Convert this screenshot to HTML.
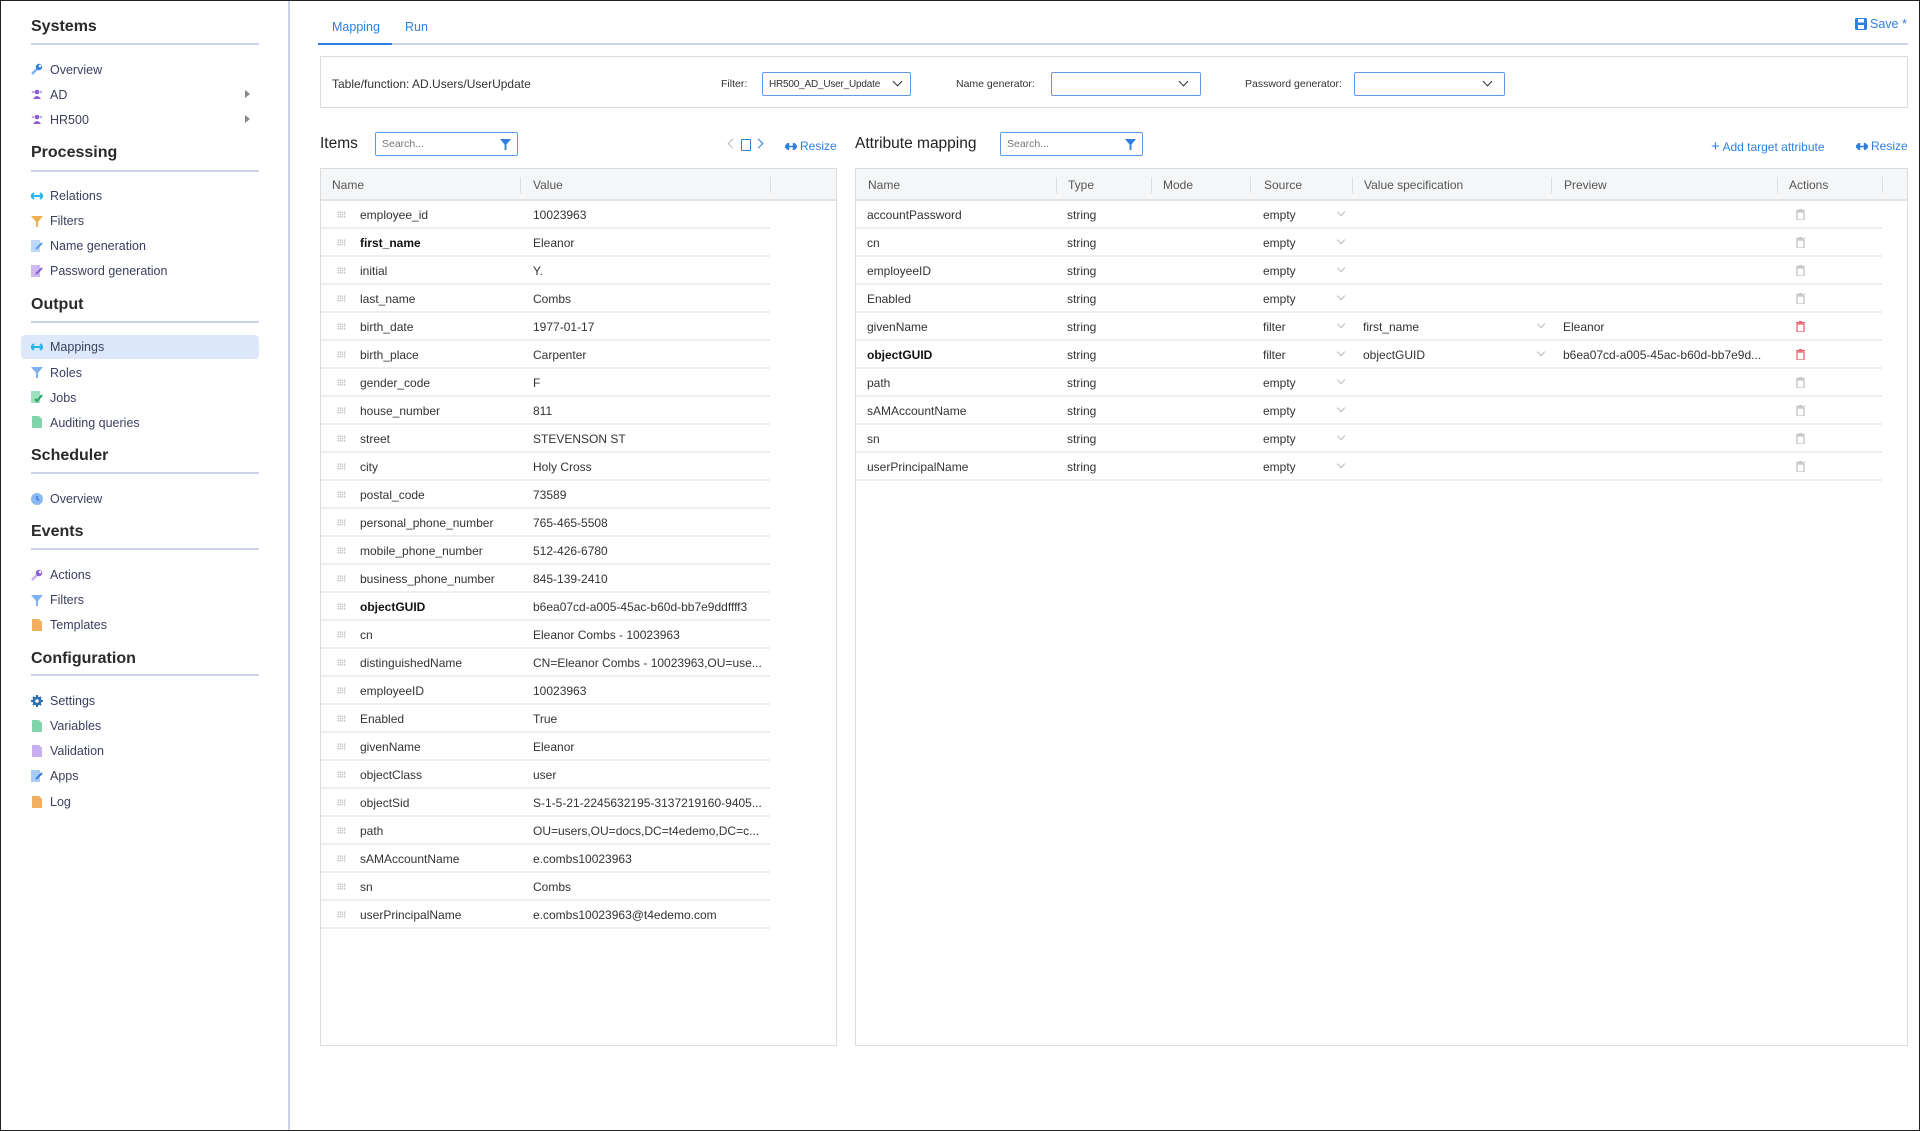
<!DOCTYPE html>
<html><head><meta charset="utf-8"><style>
*{box-sizing:border-box;margin:0;padding:0}
body{width:1920px;height:1131px;position:relative;overflow:hidden;background:#fff;font-family:"Liberation Sans",sans-serif;color:#333;font-size:12px}
.a{position:absolute;white-space:nowrap}
.frame{position:absolute;left:0;top:0;width:1920px;height:1131px;border:1.5px solid #222;pointer-events:none}
.side{position:absolute;left:0;top:0;width:290px;height:1131px;border-right:2px solid #cdd3e6}
.h{font-size:16px;font-weight:bold;color:#2a2a2a;left:31px}
.ln{position:absolute;left:31px;width:228px;height:2px;background:#cdd3e6}
.it{left:50px;font-size:12.5px;color:#3c4060}
.ic{position:absolute;left:31px;width:12px;height:12px}
.blue{color:#2f7fe0}
.tbl{position:absolute;border:1px solid #dcdcdc;background:#fff}
.th{position:absolute;left:0;top:0;right:0;height:32px;background:#f5f6f7;border-bottom:2px solid #e3e3e3}
.row{position:absolute;left:0;height:28px;border-bottom:2px solid #eeeef0}
.row span{position:absolute;top:7px;white-space:nowrap}
.dh{position:absolute;left:16px;top:10px;width:9px;height:7px;background-image:radial-gradient(#bbb 0.7px,transparent 0.8px);background-size:2.2px 2.3px}
.sel{position:absolute;height:24px;border:1px solid #5b9be8;border-radius:2px;background:#fff}
.chev{position:absolute;width:7px;height:7px;border-right:1.5px solid #333;border-bottom:1.5px solid #333;transform:rotate(45deg)}
.cv{position:absolute;width:6px;height:6px;border-right:1px solid #bbb;border-bottom:1px solid #bbb;transform:rotate(45deg)}
.dv{position:absolute;top:8px;width:1px;height:16px;background:#ddd}
.tr{position:absolute;width:9px;height:11px}
</style></head><body>
<div class="side">
<div class="a h" style="top:18px">Systems</div><div class="ln" style="top:43px"></div>
<svg class="ic" style="top:63px" viewBox="0 0 12 12"><path d="M1 11 L6 6" stroke="#7fb0f0" stroke-width="2.5"/><circle cx="8" cy="4" r="3.2" fill="#2f7fe0"/><circle cx="9" cy="3" r="1.3" fill="#fff"/></svg>
<div class="a it" style="top:63px">Overview</div>
<svg class="ic" style="top:88px" viewBox="0 0 12 12"><circle cx="6" cy="4" r="2.3" fill="#8a5cd8"/><path d="M2 11 Q6 5 10 11Z" fill="#8a5cd8"/><circle cx="2" cy="4" r="1.3" fill="#c3a8f0"/><circle cx="10" cy="4" r="1.3" fill="#c3a8f0"/></svg>
<div class="a it" style="top:88px">AD</div><div class="a" style="left:245px;top:90px;width:0;height:0;border-left:5px solid #888;border-top:4px solid transparent;border-bottom:4px solid transparent"></div>
<svg class="ic" style="top:113px" viewBox="0 0 12 12"><circle cx="6" cy="4" r="2.3" fill="#8a5cd8"/><path d="M2 11 Q6 5 10 11Z" fill="#8a5cd8"/><circle cx="2" cy="4" r="1.3" fill="#c3a8f0"/><circle cx="10" cy="4" r="1.3" fill="#c3a8f0"/></svg>
<div class="a it" style="top:113px">HR500</div><div class="a" style="left:245px;top:115px;width:0;height:0;border-left:5px solid #888;border-top:4px solid transparent;border-bottom:4px solid transparent"></div>
<div class="a h" style="top:144px">Processing</div><div class="ln" style="top:170px"></div>
<svg class="ic" style="top:190px" viewBox="0 0 12 12"><path d="M0 6h12M3 3L0 6l3 3M9 3l3 3-3 3" stroke="#2bb6e8" stroke-width="2" fill="none"/></svg><div class="a it" style="top:189px">Relations</div>
<svg class="ic" style="top:215px" viewBox="0 0 12 12"><path d="M0 1h12L7 7v5H5V7Z" fill="#f0b050"/></svg><div class="a it" style="top:214px">Filters</div>
<svg class="ic" style="top:240px" viewBox="0 0 12 12"><rect x="0" y="0" width="9" height="12" fill="#bcd8f8"/><path d="M5 9l6-6" stroke="#5a9ce8" stroke-width="2"/></svg><div class="a it" style="top:239px">Name generation</div>
<svg class="ic" style="top:265px" viewBox="0 0 12 12"><rect x="0" y="0" width="9" height="12" fill="#cdb8f0"/><path d="M5 9l6-6" stroke="#8a5cd8" stroke-width="2"/></svg><div class="a it" style="top:264px">Password generation</div>
<div class="a h" style="top:296px">Output</div><div class="ln" style="top:321px"></div>
<div class="a" style="left:21px;top:335px;width:238px;height:24px;background:#dde9fb;border-radius:4px"></div>
<svg class="ic" style="top:341px" viewBox="0 0 12 12"><path d="M0 6h12M3 3L0 6l3 3M9 3l3 3-3 3" stroke="#2bb6e8" stroke-width="2" fill="none"/></svg><div class="a it" style="top:340px">Mappings</div>
<svg class="ic" style="top:366px" viewBox="0 0 12 12"><path d="M0 1h12L7 7v5H5V7Z" fill="#7fb0f0"/></svg><div class="a it" style="top:366px">Roles</div>
<svg class="ic" style="top:391px" viewBox="0 0 12 12"><rect x="0" y="0" width="9" height="12" fill="#9ee0c0"/><path d="M4 8l2 2 5-6" stroke="#1aaa60" stroke-width="2" fill="none"/></svg><div class="a it" style="top:391px">Jobs</div>
<svg class="ic" style="top:416px" viewBox="0 0 12 12"><path d="M1 0h7l3 3v9H1Z" fill="#7fd4aa"/></svg><div class="a it" style="top:416px">Auditing queries</div>
<div class="a h" style="top:447px">Scheduler</div><div class="ln" style="top:472px"></div>
<svg class="ic" style="top:493px" viewBox="0 0 12 12"><circle cx="6" cy="6" r="6" fill="#8ab8f0"/><path d="M6 3v3l2 1.5" stroke="#2f6fd0" stroke-width="1.2" fill="none"/></svg><div class="a it" style="top:492px">Overview</div>
<div class="a h" style="top:523px">Events</div><div class="ln" style="top:548px"></div>
<svg class="ic" style="top:569px" viewBox="0 0 12 12"><path d="M1 11 L6 6" stroke="#c8b0f0" stroke-width="2.5"/><circle cx="8" cy="4" r="3.2" fill="#8a5cd8"/><circle cx="9" cy="3" r="1.3" fill="#fff"/></svg><div class="a it" style="top:568px">Actions</div>
<svg class="ic" style="top:594px" viewBox="0 0 12 12"><path d="M0 1h12L7 7v5H5V7Z" fill="#7fb0f0"/></svg><div class="a it" style="top:593px">Filters</div>
<svg class="ic" style="top:619px" viewBox="0 0 12 12"><path d="M1 0h7l3 3v9H1Z" fill="#f0b060"/></svg><div class="a it" style="top:618px">Templates</div>
<div class="a h" style="top:650px">Configuration</div><div class="ln" style="top:674px"></div>
<svg class="ic" style="top:695px" viewBox="0 0 12 12"><circle cx="6" cy="6" r="4.5" fill="#2f6fb0"/><path d="M6 0v12M0 6h12M2 2l8 8M10 2l-8 8" stroke="#2f6fb0" stroke-width="2"/><circle cx="6" cy="6" r="1.8" fill="#fff"/></svg><div class="a it" style="top:694px">Settings</div>
<svg class="ic" style="top:720px" viewBox="0 0 12 12"><path d="M1 0h7l3 3v9H1Z" fill="#7fd4aa"/></svg><div class="a it" style="top:719px">Variables</div>
<svg class="ic" style="top:745px" viewBox="0 0 12 12"><path d="M1 0h7l3 3v9H1Z" fill="#c8b0f0"/></svg><div class="a it" style="top:744px">Validation</div>
<svg class="ic" style="top:770px" viewBox="0 0 12 12"><rect x="0" y="0" width="9" height="12" fill="#a8ccf4"/><path d="M5 9l6-6" stroke="#2f7fe0" stroke-width="2"/></svg><div class="a it" style="top:769px">Apps</div>
<svg class="ic" style="top:796px" viewBox="0 0 12 12"><path d="M1 0h7l3 3v9H1Z" fill="#f0b060"/></svg><div class="a it" style="top:795px">Log</div>
</div>

<div class="a blue" style="left:332px;top:20px;font-size:12.5px">Mapping</div>
<div class="a blue" style="left:405px;top:20px;font-size:12.5px">Run</div>
<div class="a" style="left:318px;top:43px;width:1590px;height:2px;background:#cdd3e6"></div>
<div class="a" style="left:318px;top:43px;width:74px;height:2px;background:#2f7fe0"></div>
<svg class="a" style="left:1855px;top:18px" width="12" height="12" viewBox="0 0 12 12"><rect width="12" height="12" rx="1.5" fill="#2f7fe0"/><rect x="3" y="1" width="6" height="3.5" fill="#fff"/><rect x="3" y="7" width="6" height="4" fill="#fff"/></svg>
<div class="a blue" style="left:1870px;top:17px;font-size:12.5px">Save *</div>

<div class="a" style="left:320px;top:56px;width:1588px;height:52px;border:1px solid #dcdcdc"></div>
<div class="a" style="left:332px;top:77px;font-size:12px">Table/function: AD.Users/UserUpdate</div>
<div class="a" style="left:721px;top:78px;font-size:10.5px">Filter:</div>
<div class="sel" style="left:762px;top:72px;width:149px"><span class="a" style="left:6px;top:6px;font-size:10px;letter-spacing:-0.2px">HR500_AD_User_Update</span><div class="chev" style="left:131px;top:5px"></div></div>
<div class="a" style="left:956px;top:78px;font-size:10.5px">Name generator:</div>
<div class="sel" style="left:1051px;top:72px;width:150px"><div class="chev" style="left:128px;top:5px"></div></div>
<div class="a" style="left:1245px;top:78px;font-size:10.5px">Password generator:</div>
<div class="sel" style="left:1354px;top:72px;width:151px"><div class="chev" style="left:129px;top:5px"></div></div>

<div class="a" style="left:320px;top:135px;font-size:15.5px;color:#222">Items</div>
<div class="sel" style="left:375px;top:132px;width:143px"><span class="a" style="left:6px;top:5px;font-size:10.5px;color:#777">Search...</span><svg class="a" style="left:124px;top:6px" width="11" height="11" viewBox="0 0 12 12"><path d="M0 0h12L7 6v6H5V6Z" fill="#2f7fe0"/></svg></div>
<div class="a" style="left:729px;top:140px;width:7px;height:7px;border-left:1px solid #bbb;border-bottom:1px solid #bbb;transform:rotate(45deg)"></div>
<div class="a" style="left:741px;top:139px;width:10px;height:12px;border:1.2px solid #2f7fe0;border-radius:1px"></div>
<div class="a" style="left:755px;top:140px;width:7px;height:7px;border-right:1.2px solid #2f7fe0;border-top:1.2px solid #2f7fe0;transform:rotate(45deg)"></div>
<svg class="a" style="left:785px;top:143px" width="12" height="7" viewBox="0 0 12 7"><path d="M0 3.5L3.5 0V7ZM12 3.5L8.5 0V7ZM3 3.5h6" stroke="#2f7fe0" stroke-width="1.4" fill="#2f7fe0"/></svg>
<div class="a blue" style="left:800px;top:139px;font-size:12px">Resize</div>

<div class="tbl" style="left:320px;top:168px;width:517px;height:878px">
<div class="th"><span class="a" style="left:11px;top:9px;color:#555">Name</span><div class="dv" style="left:199px"></div><span class="a" style="left:212px;top:9px;color:#555">Value</span><div class="dv" style="left:449px"></div></div>
</div>
<div id="items" style="position:absolute;left:321px;top:201px;width:449px"></div>

<div class="a" style="left:855px;top:135px;font-size:15.5px;color:#222">Attribute mapping</div>
<div class="sel" style="left:1000px;top:132px;width:143px"><span class="a" style="left:6px;top:5px;font-size:10.5px;color:#777">Search...</span><svg class="a" style="left:124px;top:6px" width="11" height="11" viewBox="0 0 12 12"><path d="M0 0h12L7 6v6H5V6Z" fill="#2f7fe0"/></svg></div>
<div class="a blue" style="left:1711px;top:138px;font-size:12px"><b style="font-size:15px;font-weight:normal">+</b> Add target attribute</div>
<svg class="a" style="left:1856px;top:143px" width="12" height="7" viewBox="0 0 12 7"><path d="M0 3.5L3.5 0V7ZM12 3.5L8.5 0V7ZM3 3.5h6" stroke="#2f7fe0" stroke-width="1.4" fill="#2f7fe0"/></svg>
<div class="a blue" style="left:1871px;top:139px;font-size:12px">Resize</div>
<div class="tbl" style="left:855px;top:168px;width:1053px;height:878px">
<div class="th">
<span class="a" style="left:12px;top:9px;color:#555">Name</span><div class="dv" style="left:200px"></div>
<span class="a" style="left:212px;top:9px;color:#555">Type</span><div class="dv" style="left:295px"></div>
<span class="a" style="left:307px;top:9px;color:#555">Mode</span><div class="dv" style="left:394px"></div>
<span class="a" style="left:408px;top:9px;color:#555">Source</span><div class="dv" style="left:496px"></div>
<span class="a" style="left:508px;top:9px;color:#555">Value specification</span><div class="dv" style="left:695px"></div>
<span class="a" style="left:708px;top:9px;color:#555">Preview</span><div class="dv" style="left:921px"></div>
<span class="a" style="left:933px;top:9px;color:#555">Actions</span><div class="dv" style="left:1026px"></div>
</div></div>
<div id="attrs" style="position:absolute;left:856px;top:201px;width:1026px"></div>

<div class="frame"></div>
<script>
var it=[["employee_id","10023963"],["first_name","Eleanor",1],["initial","Y."],["last_name","Combs"],["birth_date","1977-01-17"],["birth_place","Carpenter"],["gender_code","F"],["house_number","811"],["street","STEVENSON ST"],["city","Holy Cross"],["postal_code","73589"],["personal_phone_number","765-465-5508"],["mobile_phone_number","512-426-6780"],["business_phone_number","845-139-2410"],["objectGUID","b6ea07cd-a005-45ac-b60d-bb7e9ddffff3",1],["cn","Eleanor Combs - 10023963"],["distinguishedName","CN=Eleanor Combs - 10023963,OU=use..."],["employeeID","10023963"],["Enabled","True"],["givenName","Eleanor"],["objectClass","user"],["objectSid","S-1-5-21-2245632195-3137219160-9405..."],["path","OU=users,OU=docs,DC=t4edemo,DC=c..."],["sAMAccountName","e.combs10023963"],["sn","Combs"],["userPrincipalName","e.combs10023963@t4edemo.com"]];
var h="";it.forEach(function(r,i){h+='<div class="row" style="top:'+(i*28)+'px;width:449px"><div class="dh"></div><span style="left:39px'+(r[2]?';font-weight:bold;color:#111':'')+'">'+r[0]+'</span><span style="left:212px">'+r[1]+'</span></div>'});
document.getElementById("items").innerHTML=h;
var at=[["accountPassword","empty"],["cn","empty"],["employeeID","empty"],["Enabled","empty"],["givenName","filter","first_name","Eleanor"],["objectGUID","filter","objectGUID","b6ea07cd-a005-45ac-b60d-bb7e9d...",1],["path","empty"],["sAMAccountName","empty"],["sn","empty"],["userPrincipalName","empty"]];
h="";at.forEach(function(r,i){var red=r[2]?'#f06070':'#c4c4c4';
h+='<div class="row" style="top:'+(i*28)+'px;width:1026px"><span style="left:11px'+(r[4]?';font-weight:bold;color:#111':'')+'">'+r[0]+'</span><span style="left:211px">string</span><span style="left:407px">'+r[1]+'</span><div class="cv" style="left:482px;top:8px"></div>'+(r[2]?'<span style="left:507px">'+r[2]+'</span><div class="cv" style="left:682px;top:8px"></div><span style="left:707px">'+r[3]+'</span>':'')+'<svg class="tr" style="left:940px;top:8px" viewBox="0 0 9 11"><rect x="0" y="1" width="9" height="1.3" fill="'+red+'"/><rect x="3" y="0" width="3" height="1.2" fill="'+red+'"/><rect x="1" y="3" width="7" height="8" rx="1" fill="none" stroke="'+red+'" stroke-width="1.3"/></svg></div>'});
document.getElementById("attrs").innerHTML=h;
</script>
</body></html>
